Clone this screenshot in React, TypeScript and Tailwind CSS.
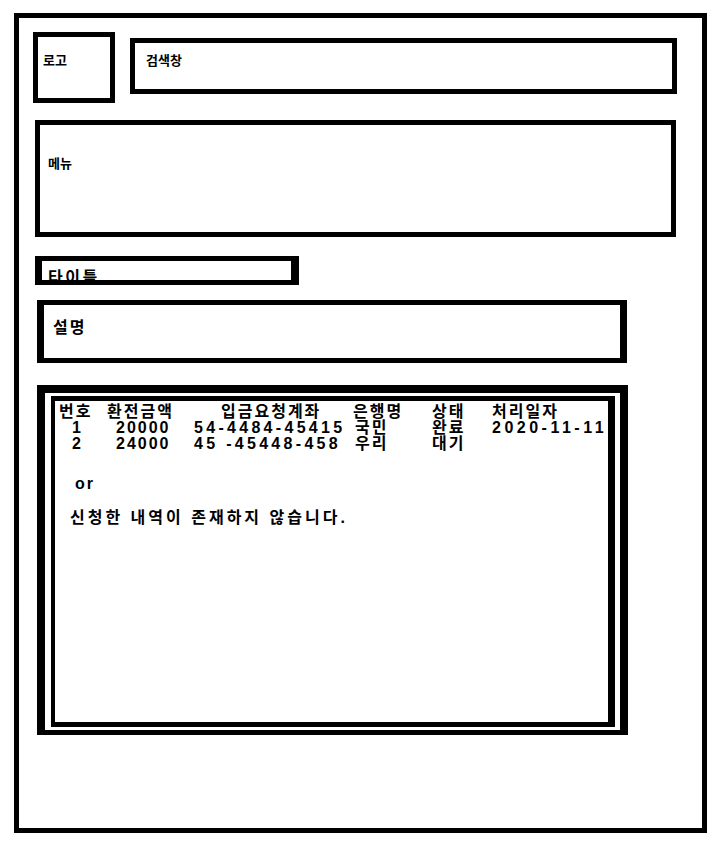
const font = { fontFamily: '"Liberation Sans", "Noto Sans CJK KR", sans-serif' };

const rows = [
  { no: '1', amount: '20000', account: '54-4484-45415', bank: '국민', status: '완료', date: '2020-11-11' },
  { no: '2', amount: '24000', account: '45 -45448-458', bank: '우리', status: '대기', date: '' },
];

export default function App() {
  return (
    <div className="w-[728px] h-[842px] bg-white pt-[13px] pl-[14px] font-bold text-black" style={font}>
      <div className="w-[693px] h-[820px] border-[5px] border-black flex flex-col pl-[14px] pt-[14px]">
        {/* header */}
        <div className="flex items-start">
          <div className="w-[82px] h-[71px] border-[5px] border-black pl-[5px] pt-[16px] text-[13px] leading-4">로고</div>
          <div className="ml-[15px] mt-[6px] w-[547px] h-[56px] border-[5px] border-black pl-[11px] pt-[10px] text-[13px] leading-4">검색창</div>
        </div>

        <div className="ml-[2px] mt-[17px] w-[641px] h-[117px] border-[5px] border-black pl-[8px] pt-[31px] text-[13px] leading-4">메뉴</div>

        <div className="ml-[2px] mt-[19px] w-[264px] h-[29px] border-y-[5px] border-l-[7px] border-r-[8px] border-black overflow-hidden pl-[6px] pt-[7px] text-[16px] leading-5 tracking-[2.5px]">타이틀</div>

        <div className="ml-[4px] mt-[15px] w-[590px] h-[63px] border-y-[5px] border-x-[7px] border-black pl-[9px] pt-[13px] text-[16px] leading-5 tracking-[2px]">설명</div>

        {/* list */}
        <div className="ml-[4px] mt-[22px] w-[591px] h-[350px] border-t-[8px] border-x-[8px] border-b-[5px] border-black pt-[3px] pl-[6px] pr-[5px] pb-[3px]">
          <div className="h-full border-y-[5px] border-l-[4px] border-r-[7px] border-black pl-[4px] pt-[3px] text-[16px] leading-4 tracking-[2px] whitespace-pre">
            <div className="grid grid-cols-[48px_83px_163px_79px_60px_1fr]">
              <div>번호</div>
              <div>환전금액</div>
              <div className="pl-[31px]">입금요청계좌</div>
              <div>은행명</div>
              <div>상태</div>
              <div>처리일자</div>
              {rows.map((r) => (
                <>
                  <div key={r.no + 'n'} className="pl-[13px]">{r.no}</div>
                  <div className="pl-[9px]">{r.amount}</div>
                  <div className="pl-[4px] tracking-[3.3px]">{r.account}</div>
                  <div className="pl-[2px]">{r.bank}</div>
                  <div>{r.status}</div>
                  <div className="tracking-[3.5px]">{r.date}</div>
                </>
              ))}
            </div>
            <div className="mt-[24px] pl-[16px]">or</div>
            <div className="mt-[18px] pl-[11px] tracking-[3px]">신청한 내역이 존재하지 않습니다.</div>
          </div>
        </div>
      </div>
    </div>
  );
}
